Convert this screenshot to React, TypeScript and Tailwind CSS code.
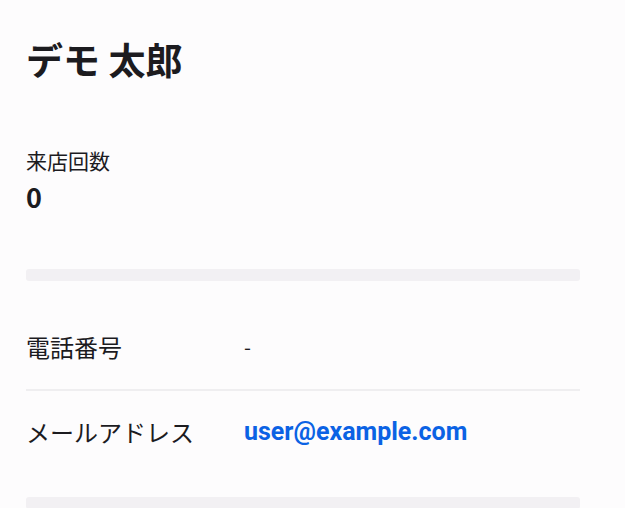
import React from 'react'

type Row = {
  label: string
  value: string
  link?: boolean
}

const rows: Row[] = [
  { label: '電話番号', value: '-' },
  { label: 'メールアドレス', value: 'user@example.com', link: true },
]

export default function App() {
  return (
    <div className="min-h-screen bg-[#fdfcfd] text-[#1c1b1f] font-['Noto_Sans_CJK_JP','Noto_Sans',sans-serif]">
      <div className="w-[554px] ml-[26px] pt-[35px]">
        {/* header */}
        <h1 className="text-[37px] leading-[48px] font-bold">デモ 太郎</h1>

        <div className="mt-[63px]">
          <p className="text-[21px] leading-[28px]">来店回数</p>
          <p className="mt-[6px] text-[27px] leading-[34px] font-bold">0</p>
        </div>

        <div className="mt-[55px] h-[12px] rounded-[3px] bg-[#f2f0f3]" />

        {/* contact info */}
        <div className="py-6">
          {rows.map((r, i) => (
            <div
              key={r.label}
              className={`flex items-center h-[84px] ${i > 0 ? 'border-t-2 border-[#efeef0]' : ''}`}
            >
              <span className="w-[218px] shrink-0 text-[24px]">{r.label}</span>
              {r.link ? (
                <a className="text-[25px] font-bold text-[#0b62e4] font-['Roboto','Noto_Sans',sans-serif]">{r.value}</a>
              ) : (
                <span className="text-[20px]">{r.value}</span>
              )}
            </div>
          ))}
        </div>

        <div className="h-[12px] rounded-[3px] bg-[#f2f0f3]" />
      </div>
    </div>
  )
}
